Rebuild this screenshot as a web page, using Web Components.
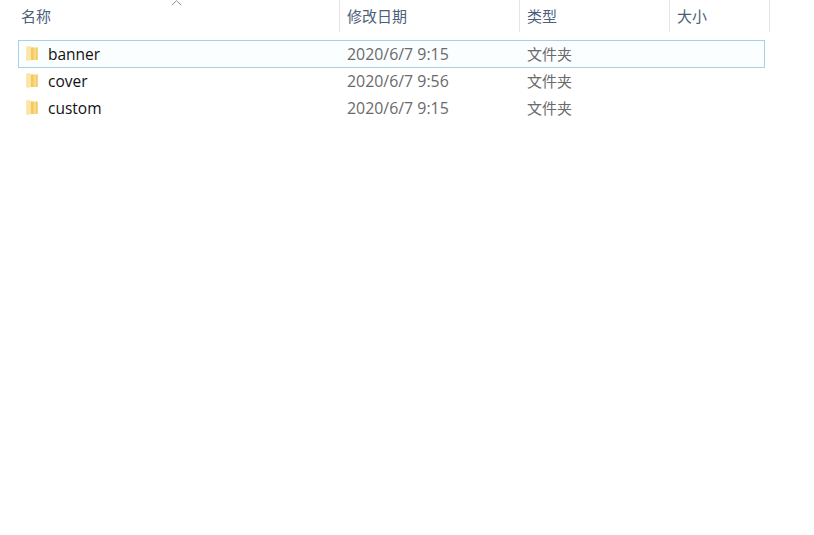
<!DOCTYPE html>
<html>
<head>
<meta charset="utf-8">
<title>banner</title>
<style>
  html, body { margin: 0; padding: 0; background: #fff; }
  body { font-family: "Open Sans", "Noto Sans CJK SC", sans-serif; }
</style>
</head>
<body>
<file-list>
  <file-header></file-header>
  <file-row name="banner" date="2020/6/7 9:15" kind="文件夹" selected></file-row>
  <file-row name="cover" date="2020/6/7 9:56" kind="文件夹"></file-row>
  <file-row name="custom" date="2020/6/7 9:15" kind="文件夹"></file-row>
</file-list>

<script>
class FileList extends HTMLElement {
  constructor() {
    super();
    this.attachShadow({mode: 'open'}).innerHTML = `
      <style>
        :host { display: block; height: 535px; overflow: hidden; }
        .rows { display: flex; flex-direction: column; padding: 8px 0 0 18px; width: 747px; }
      </style>
      <slot name="head"></slot>
      <div class="rows"><slot></slot></div>
    `;
  }
}

class FileHeader extends HTMLElement {
  constructor() {
    super();
    this.slot = 'head';
    this.attachShadow({mode: 'open'}).innerHTML = `
      <style>
        :host { display: block; position: relative; width: 770px; height: 32px; }
        .cols { display: grid; grid-template-columns: 340px 180px 150px 100px; height: 32px; }
        .col {
          box-sizing: border-box; padding: 0 0 1px 7px; border-right: 1px solid #e5e5e5;
          font: 15px/31px "Noto Sans CJK SC", sans-serif; color: #4c607a;
        }
        .col:first-child { padding-left: 21px; }
        svg { position: absolute; left: 171px; top: 0; }
      </style>
      <div class="cols">
        <div class="col">名称</div>
        <div class="col">修改日期</div>
        <div class="col">类型</div>
        <div class="col">大小</div>
      </div>
      <svg width="11" height="6" viewBox="0 0 11 6"><path d="M.8 5.2 5.5.7l4.7 4.5" fill="none" stroke="#8a8f98" stroke-width="1"/></svg>
    `;
  }
}

class FileRow extends HTMLElement {
  constructor() {
    super();
    this.attachShadow({mode: 'open'});
  }
  connectedCallback() {
    this.shadowRoot.innerHTML = `
      <style>
        :host {
          display: block; box-sizing: border-box; height: 27px;
          border: 1px solid transparent;
        }
        :host([selected]) { height: 28px; border-color: #a8cfe2; background: #fbfeff; }
        .row {
          display: grid; grid-template-columns: 321px 180px 150px; align-items: center;
          height: 100%; font: 15.5px/25px "Open Sans", "Noto Sans CJK SC", sans-serif; white-space: nowrap;
        }
        .name { display: flex; align-items: center; gap: 9px; padding-left: 6px; color: #111; }
        .name svg { flex: none; margin-top: -2px; }
        .date { padding-left: 7px; color: #6a6a6a; font-size: 15.9px; }
        .kind {
          padding: 0 0 2px 7px; color: #6a6a6a; line-height: 23px;
          font-family: "Noto Sans CJK SC", sans-serif; font-size: 15px;
        }
      </style>
      <div class="row">
        <span class="name">
          <svg width="14" height="17" viewBox="0 0 14 17">
            <path d="M1.5 1.5h3.5l.6 1h6.9v12.5H1.5z" fill="#f8da86"/>
            <path d="M1.5 1.5 6 2.5v12.8l-4.5.7z" fill="#fbe6a8"/>
            <path d="M6 2.5h2.5v12.5H6z" fill="#f5c85f"/>
            <path d="M11.5 2.5h1v12.5h-1z" fill="#eebb4d"/>
          </svg>
          <span>${this.getAttribute('name')}</span>
        </span>
        <span class="date">${this.getAttribute('date')}</span>
        <span class="kind">${this.getAttribute('kind')}</span>
      </div>
    `;
  }
}

customElements.define('file-list', FileList);
customElements.define('file-header', FileHeader);
customElements.define('file-row', FileRow);
</script>
</body>
</html>
